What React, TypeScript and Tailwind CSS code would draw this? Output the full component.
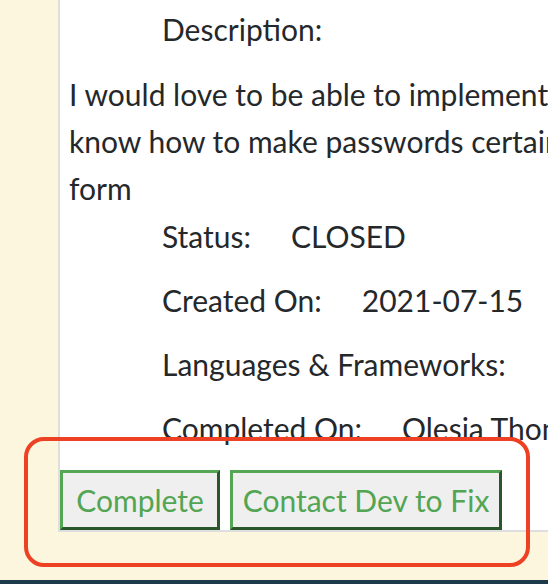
import React from "react"

const details = [
  { label: "Status:", value: "CLOSED" },
  { label: "Created On:", value: "2021-07-15" },
  { label: "Languages & Frameworks:", value: "HTML, CSS, JavaScript" },
  { label: "Completed On:", value: "Olesia Thompson" },
]

export default function App() {
  return (
    <div
      className="relative h-[584px] w-[548px] overflow-hidden bg-[#fdf6df] text-[#25282b]"
      style={{ fontFamily: "Lato, 'Noto Sans', sans-serif" }}
    >
      <div className="ml-[58px] w-[900px] border-b-2 border-l-2 border-[#dedede] bg-white">
        <div className="h-[530px] pt-[6px] text-[30px]">
          {/* description block */}
          <div className="ml-[102px] leading-[47px]">Description:</div>
          <div className="mt-[18px] whitespace-nowrap pl-[9px] leading-[47px]">
            <div>I would love to be able to implement a password strength checker so users</div>
            <div>know how to make passwords certain to be secure in the sign up</div>
            <div>form</div>
          </div>

          <div className="mt-px">
            {details.map((d) => (
              <div key={d.label} className="ml-[102px] flex h-[64px] gap-10 whitespace-nowrap leading-[47px]">
                <span>{d.label}</span>
                <span>{d.value}</span>
              </div>
            ))}
          </div>

          <div className="mt-px flex gap-[10px]">
            <button className="h-[60px] w-[160px] border-[3px] border-t-[#54a554] border-l-[#54a554] border-b-[#2b552b] border-r-[#2b552b] bg-[#efefef] text-[30px] text-[#52a552]">
              Complete
            </button>
            <button className="h-[60px] w-[272px] border-[3px] border-t-[#54a554] border-l-[#54a554] border-b-[#2b552b] border-r-[#2b552b] bg-[#efefef] text-[30px] text-[#52a552]">
              Contact Dev to Fix
            </button>
          </div>
        </div>
      </div>

      {/* highlight overlay */}
      <div className="absolute left-[24px] top-[437px] h-[130px] w-[506px] rounded-[20px] border-4 border-[#ee4124]" />

      <div className="absolute bottom-0 left-0 h-[4px] w-full bg-[#1c3a4a]" />
    </div>
  )
}
